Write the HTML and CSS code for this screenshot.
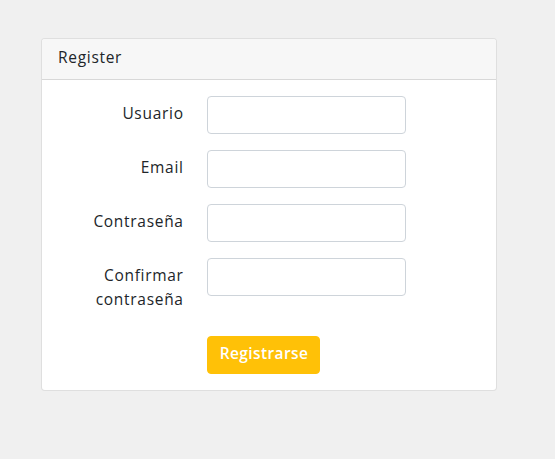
FILE: index.html
```html
<!DOCTYPE html>
<html lang="es">
<head>
<meta charset="utf-8">
<title>Register</title>
<link rel="stylesheet" href="styles.css">
</head>
<body>
<main class="page">
  <section class="card">
    <header class="card-header">Register</header>
    <form class="card-body">
      <div class="row">
        <label class="label" for="u">Usuario</label>
        <div class="field"><input class="input" id="u" type="text"></div>
      </div>
      <div class="row">
        <label class="label" for="e">Email</label>
        <div class="field"><input class="input" id="e" type="email"></div>
      </div>
      <div class="row">
        <label class="label" for="p">Contraseña</label>
        <div class="field"><input class="input" id="p" type="password"></div>
      </div>
      <div class="row">
        <label class="label" for="c">Confirmar contraseña</label>
        <div class="field"><input class="input" id="c" type="password"></div>
      </div>
      <div class="row row-last">
        <div class="label"></div>
        <div class="field"><button class="btn" type="submit">Registrarse</button></div>
      </div>
    </form>
  </section>
</main>
</body>
</html>
```

FILE: styles.css
```css
* { box-sizing: border-box; }
html, body { margin: 0; }
body {
  background: #f0f0f0;
  font-family: "Open Sans", "Noto Sans", sans-serif;
  font-size: 15.5px;
  line-height: 24px;
  letter-spacing: 0.7px;
  color: #212529;
}
.page {
  padding: 38px 0 0 41px;
}
.card {
  width: 456px;
  background: #fff;
  border: 1px solid rgba(0,0,0,.125);
  border-radius: 4px;
}
.card-header {
  background: #f7f7f7;
  border-bottom: 1px solid rgba(0,0,0,.125);
  padding: 6px 16px 10px;
  border-radius: 3px 3px 0 0;
}
.card-body {
  padding: 16px 16px;
  margin: 0;
}
.row {
  display: flex;
  margin: 0 -12px 16px;
}
.row-last { margin-bottom: 0; }
.label {
  width: 148.67px;
  padding: 5px 11px 9px 12px;
  text-align: right;
}
.field {
  width: 223px;
  padding: 0 12px;
}
.input {
  display: block;
  width: 100%;
  height: 38px;
  border: 1px solid #ced4da;
  border-radius: 4px;
  background: #fff;
  font: inherit;
  padding: 6px 12px;
}
.btn {
  height: 38px;
  padding: 4px 11px 8px 12px;
  background: #ffc107;
  color: #fff;
  border: 1px solid #ffc107;
  border-radius: 4px;
  font: inherit;
  font-weight: 600;
  letter-spacing: 0.4px;
}
```
